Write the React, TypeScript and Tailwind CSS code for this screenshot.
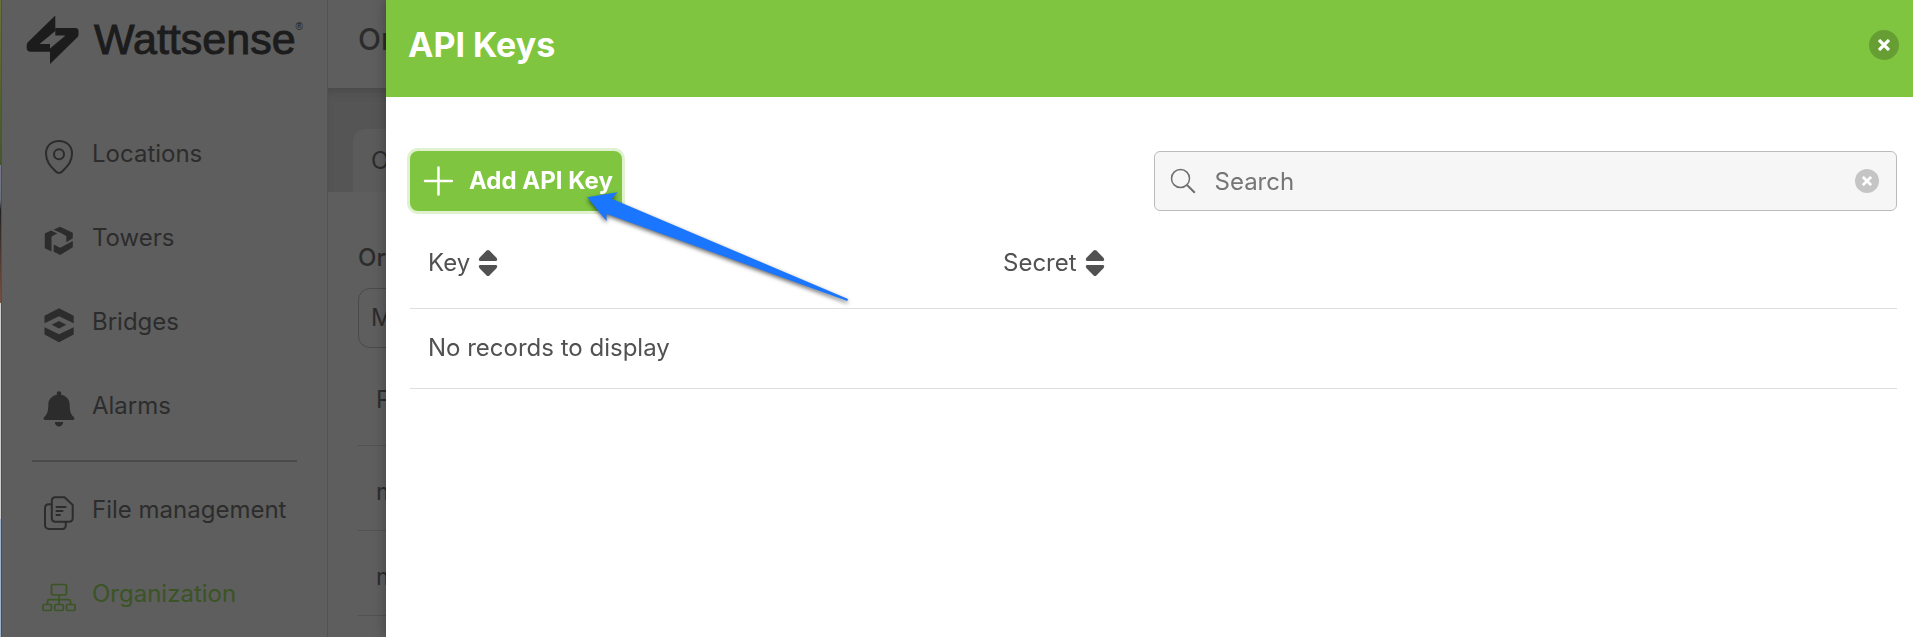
import type { ReactNode } from "react";

const sidebarItems: { label: string; icon: ReactNode }[] = [
  {
    label: "Locations",
    icon: (
      <svg viewBox="0 0 34 40" className="h-10 w-[34px]" fill="none" stroke="currentColor" strokeWidth="2">
        <path d="M17 36C15.7 36 14.600 35.400 13.500 34.200C9.500 30 4 25.500 4 16.500C4 8.800 9.500 4 17 4s13 4.800 13 12.500C30 25.500 24.500 30 20.500 34.200C19.400 35.400 18.300 36 17 36Z" />
        <circle cx="17" cy="17.300" r="5" />
      </svg>
    ),
  },
  {
    label: "Towers",
    icon: (
      <svg viewBox="0 0 34 40" className="h-10 w-[34px]" fill="currentColor">
        <path d="M11.500 8.800L18 5.700l12.800 6v5.500l-6.500 4V15L18 11.600z" />
        <path d="M2.800 12.400L9 9.400l6.300 3.200-3.500 1.600-2.300 1.500V30.400l-6.700-3.200z" />
        <path d="M11.700 23.500l6.500 3.200 12.600-6.700v6.300l-12.600 7.600-6.500-3.200z" />
      </svg>
    ),
  },
  {
    label: "Bridges",
    icon: (
      <svg viewBox="0 0 34 40" className="h-10 w-[34px]" fill="currentColor">
        <path d="M17 3.200l14.700 7.600v7.400L17 11.300 2.500 18.200v-7.400z" />
        <path d="M17 16l7.300 3.700L17 23.400l-7.300-3.700z" />
        <path d="M2.500 22.200L17 29.300l14.700-7.100v7.300L17 37.300 2.500 29.500z" />
      </svg>
    ),
  },
  {
    label: "Alarms",
    icon: (
      <svg viewBox="0 0 34 40" className="h-10 w-[34px]" fill="currentColor">
        <path d="M17 2.300c1.300 0 2.200.9 2.200 2.200v1.300c5.300 1.200 8.500 5 8.500 10.200 0 6.500 1.300 9.500 4 12 1.300 1.300.9 3-1 3H3.300c-1.900 0-2.300-1.700-1-3 2.700-2.500 4-5.500 4-12C6.300 10.800 9.500 7 14.800 5.800V4.500c0-1.300.9-2.200 2.200-2.200z" />
        <path d="M12.800 33h8.400c-.3 2.800-2 4.600-4.200 4.600S13.100 35.800 12.800 33z" />
      </svg>
    ),
  },
];

function FileIcon() {
  return (
    <svg viewBox="0 0 34 40" className="h-10 w-[34px]" fill="none" stroke="currentColor" strokeWidth="2" strokeLinecap="round" strokeLinejoin="round">
      <path d="M13.500 4.200h9L30.700 12v13c0 2.300-1.500 3.700-3.700 3.700H13.500c-2.200 0-3.700-1.500-3.700-3.700V8c0-2.300 1.500-3.800 3.700-3.800z" />
      <path d="M9.300 11.300H7c-2.300 0-4 1.400-4 3.700v17c0 2.300 1.700 4 4 4h13.200c2.200 0 3.600-1.500 3.600-3.700v-3" />
      <path d="M14.500 14h9M14.500 18h6M14.500 22h3.500" />
    </svg>
  );
}

function OrgIcon() {
  return (
    <svg viewBox="0 0 34 40" className="h-10 w-[34px]" fill="none" stroke="currentColor" strokeWidth="1.700">
      <rect x="9.500" y="7.500" width="15" height="10.500" rx="1.500" />
      <path d="M17 18v9.500M5.500 27.500v-3.300c0-1 .6-1.600 1.600-1.600h19.800c1 0 1.600.6 1.600 1.600v3.300" />
      <rect x="1" y="27.500" width="8.500" height="6" rx="1.200" />
      <rect x="12.800" y="27.500" width="8.500" height="6" rx="1.200" />
      <rect x="24.500" y="27.500" width="8.500" height="6" rx="1.200" />
    </svg>
  );
}

function SidebarLink({ label, icon, active = false }: { label: string; icon: ReactNode; active?: boolean }) {
  return (
    <li>
      <a
        href="#"
        className={`flex h-[84px] items-center gap-4 pl-10 text-2xl ${active ? "text-[#3b5424]" : "text-[#2c2c2c]"}`}
      >
        <span className="pt-1.5">{icon}</span>
        <span>{label}</span>
      </a>
    </li>
  );
}

function Sidebar() {
  return (
    <aside className="w-[326px] shrink-0 border-r border-[#525252]">
      <div className="flex h-28 items-start gap-3.5 pl-6 pt-3.5 text-[#1c1c1c]">
        <svg viewBox="0 0 54 52" className="h-[52px] w-[54px]" fill="currentColor">
          <path d="M29.300 1.500v15.500L13.500 30H24v7.700H4.500C2.200 37.700.7 36.300.7 34v-2.500c0-1.500.5-2.600 1.600-3.700z" />
          <path d="M29.300 14h20c2 0 3.200 1.200 3.200 3.200v3c0 1.400-.4 2.400-1.400 3.400L24 50V34.500L39.500 21.500H29.300z" />
        </svg>
        <div className="flex items-start font-['Liberation_Sans',sans-serif] text-[43px] leading-[50px] [-webkit-text-stroke:1px_#1c1c1c]">
          Wattsense
          <span className="pt-2 text-[10px] leading-none [-webkit-text-stroke:0px]">®</span>
        </div>
      </div>
      <nav aria-label="Main">
        <ul>
          {sidebarItems.map((item) => (
            <SidebarLink key={item.label} label={item.label} icon={item.icon} />
          ))}
        </ul>
        <hr className="ml-[30px] mr-[30px] mt-3 border-t-2 border-[#4a4a4a]" />
        <ul className="pt-1.5">
          <SidebarLink label="File management" icon={<FileIcon />} />
          <SidebarLink label="Organization" icon={<OrgIcon />} active />
        </ul>
      </nav>
    </aside>
  );
}

function PageBehind() {
  return (
    <main className="flex-1 text-2xl text-[#2c2c2c]">
      <header className="flex h-[88px] items-center pb-2 pl-[30px]">
        <h1 className="text-[30px] font-medium">Or</h1>
      </header>
      <div className="flex h-[104px] items-end bg-[#555] pl-[25px] shadow-[inset_0_8px_8px_-4px_#4a4a4a]">
        <div className="flex h-[63px] w-60 items-center rounded-t-xl bg-[#5b5b5b] pl-[18px]">O</div>
      </div>
      <div className="pl-[30px]">
        <div className="flex h-24 items-end pb-3 font-medium">
          <span className="leading-[36px]">Or</span>
        </div>
        <div className="flex h-[60px] w-80 items-center rounded-xl border border-[#4a4a4a] pl-3">M</div>
        <table className="w-full border-collapse text-left">
          <thead>
            <tr className="h-[97px] border-b border-[#525252]">
              <th className="pl-[18px] pt-2 font-normal">P</th>
            </tr>
          </thead>
          <tbody>
            <tr className="h-[85px] border-b border-[#525252]">
              <td className="pl-[18px] pt-2">m</td>
            </tr>
            <tr className="h-[85px] border-b border-[#525252]">
              <td className="pl-[18px] pt-2">m</td>
            </tr>
          </tbody>
        </table>
      </div>
    </main>
  );
}

function Cross({ className }: { className: string }) {
  return (
    <svg viewBox="0 0 12 12" className={className} stroke="white" strokeWidth="3.200">
      <path d="M1 1l10 10M11 1L1 11" />
    </svg>
  );
}

function SortIcon() {
  return (
    <svg viewBox="0 0 20 28" className="h-7 w-5" fill="#515151">
      <path d="M8.600 1.600Q10 .3 11.400 1.600L18.700 9Q20 12 17.700 12H2.300Q0 12 1.300 9z" />
      <path d="M8.600 26.400Q10 27.700 11.400 26.400L18.700 19Q20 16 17.700 16H2.300Q0 16 1.300 19z" />
    </svg>
  );
}

function ColumnHeader({ label, className = "" }: { label: string; className?: string }) {
  return (
    <th scope="col" className={`px-[18px] pt-0.5 font-normal ${className}`}>
      <button type="button" className="flex items-center gap-2">
        {label}
        <SortIcon />
      </button>
    </th>
  );
}

function PointerArrow() {
  return (
    <svg
      aria-hidden="true"
      viewBox="0 0 270 120"
      className="pointer-events-none absolute left-[200px] top-[190px] h-[120px] w-[270px] drop-shadow-[0_2px_2px_rgba(0,0,0,0.6)]"
    >
      <path
        d="M1.300 7.300L31.700 2.300 25.700 8.700 262 109 261.300 111 20.300 23.700 20.700 31.300z"
        fill="#1a75ff"
      />
    </svg>
  );
}

function ApiKeysDrawer() {
  return (
    <section
      role="dialog"
      aria-labelledby="drawer-title"
      className="fixed inset-y-0 left-[386px] right-0 bg-white text-2xl text-[#515151] shadow-[0_0_12px_rgba(0,0,0,0.3)]"
    >
      <header className="flex h-[97px] items-center justify-between bg-[#7fc540] pb-2 pl-[22px] pr-3.5">
        <h2 id="drawer-title" className="text-[34px] font-bold text-white">
          API Keys
        </h2>
        <button
          type="button"
          aria-label="Close"
          className="flex size-[30px] items-center justify-center rounded-full bg-[#669e33]"
        >
          <Cross className="size-3" />
        </button>
      </header>
      <div className="pl-6 pr-4 pt-[54px]">
        <div className="flex items-center justify-between">
          <button
            type="button"
            className="flex h-[60px] w-[212px] items-center gap-4 rounded-lg bg-[#7fc540] pl-[13px] font-bold whitespace-nowrap text-white ring-3 ring-[#dff1cf]"
          >
            <svg viewBox="0 0 30 30" className="size-[30px] shrink-0" stroke="white" strokeWidth="2.500" strokeLinecap="round">
              <path d="M15.500 1.500v27M2 15h27" />
            </svg>
            Add API Key
          </button>
          <label className="flex h-[60px] w-1/2 items-center rounded-md border border-[#bbb] bg-[#f6f6f6] pl-[15px] pr-[17px]">
            <svg viewBox="0 0 26 26" className="size-[26px] shrink-0" fill="none" stroke="#6e6e6e" strokeWidth="1.500">
              <circle cx="10.500" cy="10.500" r="9" />
              <path d="M17 17l7.800 7.800" strokeWidth="2" />
            </svg>
            <input
              type="text"
              aria-label="Search"
              placeholder="Search"
              className="min-w-0 flex-1 bg-transparent pl-[19px] pt-0.5 outline-none placeholder:text-[#757575]"
            />
            <button
              type="button"
              aria-label="Clear search"
              className="flex size-6 items-center justify-center rounded-full bg-[#c5c5c5]"
            >
              <Cross className="size-2.5" />
            </button>
          </label>
        </div>
        <table className="mt-[5px] w-full table-fixed border-collapse text-left">
          <thead>
            <tr className="h-[92px] border-b border-[#dedede]">
              <ColumnHeader label="Key" className="w-[575px]" />
              <ColumnHeader label="Secret" />
            </tr>
          </thead>
          <tbody>
            <tr className="h-20 border-b border-[#dedede]">
              <td colSpan={2} className="px-[18px]">
                No records to display
              </td>
            </tr>
          </tbody>
        </table>
      </div>
      <PointerArrow />
    </section>
  );
}

export default function App() {
  return (
    <div className="flex h-screen overflow-hidden bg-[#5e5e5e] font-['Inter',sans-serif]">
      <div className="w-0.5 shrink-0 border-r border-[#4f4f4f] bg-[linear-gradient(#6a7238_0,#44552a_165px,#77778a_165px,#6a7080_200px,#222_210px,#7a5040_303px,#cfcfcf_303px,#cfcfcf_519px,#9fb0cc_519px)]" />
      <Sidebar />
      <PageBehind />
      <ApiKeysDrawer />
    </div>
  );
}
